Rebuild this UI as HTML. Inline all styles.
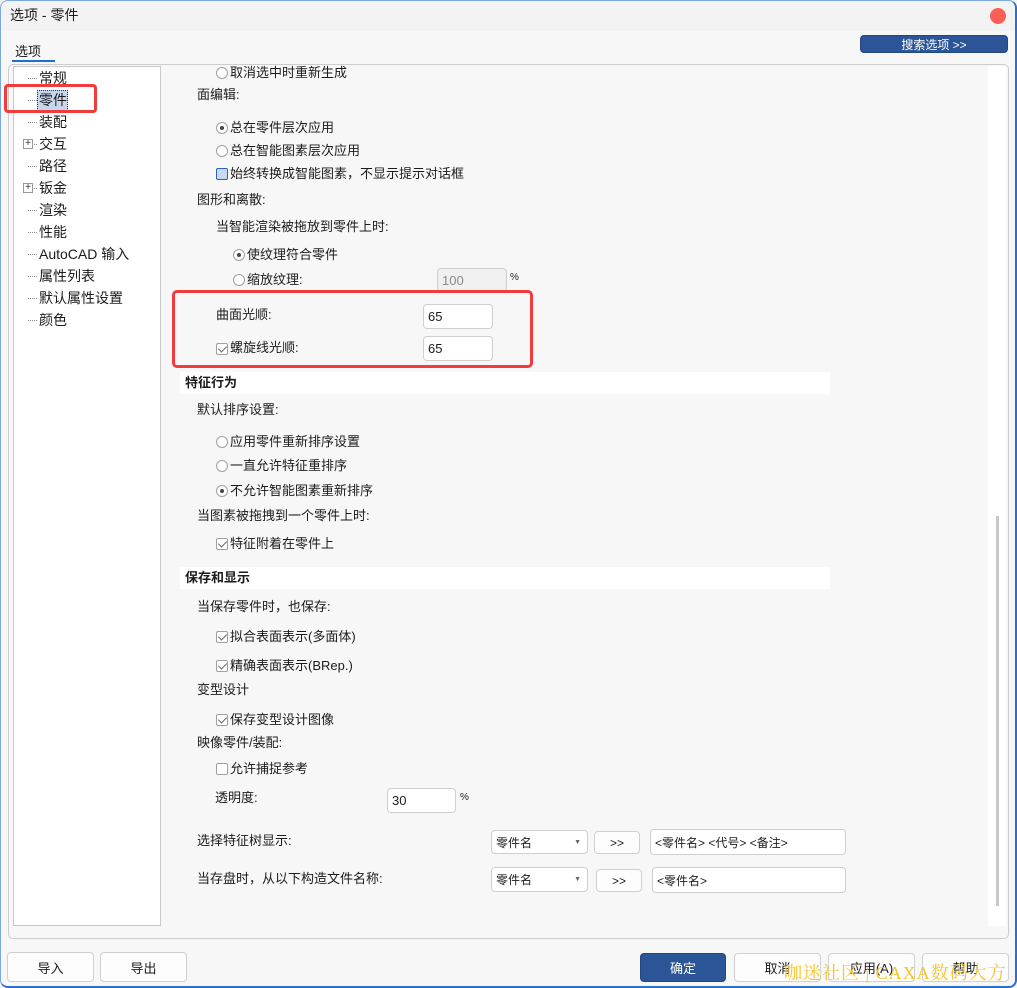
<!DOCTYPE html>
<html><head><meta charset="utf-8"><style>
*{box-sizing:border-box;margin:0;padding:0}
body{width:1017px;height:988px;overflow:hidden;background:#f3f3f3;font-family:"Liberation Sans","Noto Sans CJK SC",sans-serif;font-size:13px;color:#1b1b1b;position:relative}
.a{position:absolute;white-space:nowrap;line-height:16px}
.t{position:absolute;white-space:nowrap;line-height:16px;font-size:14px}
.rb{position:absolute;width:12px;height:12px;border:1px solid #a0a0a0;border-radius:50%;background:#fff}
.rb.on::after{content:"";position:absolute;left:3px;top:3px;width:4px;height:4px;border-radius:50%;background:#444}
.cb{position:absolute;width:12px;height:12px;border:1px solid #a0a0a0;border-radius:2px;background:#fff}
.cb.on::after{content:"";position:absolute;left:3px;top:0px;width:4px;height:7px;border:solid #666;border-width:0 1.5px 1.5px 0;transform:rotate(45deg)}
.in{position:absolute;background:#fff;border:1px solid #cfcfcf;border-radius:4px;padding-left:4px;display:flex;align-items:center;font-size:13px}
.btn{position:absolute;background:#fdfdfd;border:1px solid #d0d0d0;border-radius:4px;display:flex;align-items:center;justify-content:center;font-size:13px}
.hdr{position:absolute;left:180px;width:650px;height:22px;background:#fff;font-weight:bold;font-size:13px;line-height:22px;padding-left:5px}
.dot{position:absolute;left:28px;width:9px;border-top:1px dotted #888}
.plus{position:absolute;left:23px;width:10px;height:10px;border:1px solid #999;background:#fff;font-size:10px;line-height:8px;text-align:center;color:#333}
</style></head><body>
<div style="position:absolute;left:0;top:0;width:1017px;height:988px;border:1px solid #7aa7dc;border-right:2px solid #2a6fcf;border-bottom:2px solid #2a6fcf;border-radius:8px;pointer-events:none;z-index:5"></div>
<div class="a" style="left:10px;top:7px;font-size:14px">选项 - 零件</div>
<div style="position:absolute;left:990px;top:8px;width:16px;height:16px;border-radius:50%;background:#f95f53"></div>
<div style="position:absolute;left:0;top:31px;width:1017px;height:957px;background:#f7f7f7"></div>
<div class="a" style="left:15px;top:44px">选项</div>
<div style="position:absolute;left:12px;top:60px;width:43px;height:2px;background:#1f6fd0"></div>
<div class="btn" style="left:860px;top:35px;width:148px;height:18px;background:#2b5597;border-color:#24477e;color:#fff;font-size:12px">搜索选项 &gt;&gt;</div>
<div style="position:absolute;left:8px;top:64px;width:1001px;height:875px;border:1px solid #cdcdcd;border-radius:5px;background:#f7f7f7"></div>
<div style="position:absolute;left:13px;top:66px;width:148px;height:860px;border:1px solid #c8c8c8;background:#fff"></div>
<div style="position:absolute;left:988px;top:66px;width:18px;height:860px;background:#fff"></div>
<div style="position:absolute;left:996px;top:516px;width:3px;height:390px;background:#c8c8c8"></div>

<div class="dot" style="top:78px"></div><div class="t" style="left:39px;top:70px">常规</div>
<div class="dot" style="top:100px"></div>
<div style="position:absolute;left:37px;top:90px;width:31px;height:21px;background:#c6d6ec;border:1px dotted #333"></div>
<div class="t" style="left:39px;top:92px">零件</div>
<div class="dot" style="top:122px"></div><div class="t" style="left:39px;top:114px">装配</div>
<div class="dot" style="top:144px"></div><div class="plus" style="top:139px">+</div><div class="t" style="left:39px;top:136px">交互</div>
<div class="dot" style="top:166px"></div><div class="t" style="left:39px;top:158px">路径</div>
<div class="dot" style="top:188px"></div><div class="plus" style="top:183px">+</div><div class="t" style="left:39px;top:180px">钣金</div>
<div class="dot" style="top:210px"></div><div class="t" style="left:39px;top:202px">渲染</div>
<div class="dot" style="top:232px"></div><div class="t" style="left:39px;top:224px">性能</div>
<div class="dot" style="top:254px"></div><div class="t" style="left:39px;top:246px">AutoCAD 输入</div>
<div class="dot" style="top:276px"></div><div class="t" style="left:39px;top:268px">属性列表</div>
<div class="dot" style="top:298px"></div><div class="t" style="left:39px;top:290px">默认属性设置</div>
<div class="dot" style="top:320px"></div><div class="t" style="left:39px;top:312px">颜色</div>
<div style="position:absolute;left:4px;top:84px;width:93px;height:29px;border:3px solid #f23c3c;border-radius:4px"></div>

<div class="rb" style="left:216px;top:67px"></div><div class="a" style="left:230px;top:65px">取消选中时重新生成</div>
<div class="a" style="left:197px;top:87px">面编辑:</div>
<div class="rb on" style="left:216px;top:122px"></div><div class="a" style="left:230px;top:120px">总在零件层次应用</div>
<div class="rb" style="left:216px;top:145px"></div><div class="a" style="left:230px;top:143px">总在智能图素层次应用</div>
<div class="cb" style="left:216px;top:168px;background:#c9daf0;border-color:#2b64b8;border-width:1.5px"></div><div class="a" style="left:230px;top:166px">始终转换成智能图素，不显示提示对话框</div>
<div class="a" style="left:197px;top:192px">图形和离散:</div>
<div class="a" style="left:216px;top:219px">当智能渲染被拖放到零件上时:</div>
<div class="rb on" style="left:233px;top:249px"></div><div class="a" style="left:247px;top:247px">使纹理符合零件</div>
<div class="rb" style="left:233px;top:274px"></div><div class="a" style="left:247px;top:272px">缩放纹理:</div>
<div class="in" style="left:437px;top:268px;width:70px;height:24px;background:#f0f0f0;color:#888">100</div>
<div class="a" style="left:510px;top:270px;font-size:10px">%</div>
<div class="a" style="left:216px;top:307px">曲面光顺:</div>
<div class="in" style="left:423px;top:304px;width:70px;height:25px">65</div>
<div class="cb on" style="left:216px;top:343px"></div><div class="a" style="left:230px;top:340px">螺旋线光顺:</div>
<div class="in" style="left:423px;top:336px;width:70px;height:25px">65</div>
<div style="position:absolute;left:172px;top:290px;width:361px;height:78px;border:3px solid #f23c3c;border-radius:5px"></div>

<div class="hdr" style="top:372px">特征行为</div>
<div class="a" style="left:197px;top:402px">默认排序设置:</div>
<div class="rb" style="left:216px;top:436px"></div><div class="a" style="left:230px;top:434px">应用零件重新排序设置</div>
<div class="rb" style="left:216px;top:460px"></div><div class="a" style="left:230px;top:458px">一直允许特征重排序</div>
<div class="rb on" style="left:216px;top:485px"></div><div class="a" style="left:230px;top:483px">不允许智能图素重新排序</div>
<div class="a" style="left:197px;top:508px">当图素被拖拽到一个零件上时:</div>
<div class="cb on" style="left:216px;top:538px"></div><div class="a" style="left:230px;top:536px">特征附着在零件上</div>

<div class="hdr" style="top:567px">保存和显示</div>
<div class="a" style="left:197px;top:599px">当保存零件时，也保存:</div>
<div class="cb on" style="left:216px;top:631px"></div><div class="a" style="left:230px;top:629px">拟合表面表示(多面体)</div>
<div class="cb on" style="left:216px;top:660px"></div><div class="a" style="left:230px;top:658px">精确表面表示(BRep.)</div>
<div class="a" style="left:197px;top:682px">变型设计</div>
<div class="cb on" style="left:216px;top:714px"></div><div class="a" style="left:230px;top:712px">保存变型设计图像</div>
<div class="a" style="left:197px;top:735px">映像零件/装配:</div>
<div class="cb" style="left:216px;top:763px"></div><div class="a" style="left:230px;top:761px">允许捕捉参考</div>
<div class="a" style="left:215px;top:790px">透明度:</div>
<div class="in" style="left:387px;top:788px;width:69px;height:25px">30</div>
<div class="a" style="left:460px;top:790px;font-size:10px">%</div>

<div class="a" style="left:197px;top:833px">选择特征树显示:</div>
<div class="in" style="left:491px;top:830px;width:97px;height:24px;font-size:12px">零件名<span style="position:absolute;right:6px;font-size:7px;color:#666">▼</span></div>
<div class="btn" style="left:594px;top:831px;width:46px;height:23px;font-size:12px">&gt;&gt;</div>
<div class="in" style="left:650px;top:829px;width:196px;height:26px;font-size:12px">&lt;零件名&gt; &lt;代号&gt; &lt;备注&gt;</div>
<div class="a" style="left:197px;top:871px">当存盘时，从以下构造文件名称:</div>
<div class="in" style="left:491px;top:867px;width:97px;height:25px;font-size:12px">零件名<span style="position:absolute;right:6px;font-size:7px;color:#666">▼</span></div>
<div class="btn" style="left:596px;top:869px;width:46px;height:23px;font-size:12px">&gt;&gt;</div>
<div class="in" style="left:652px;top:867px;width:194px;height:26px;font-size:12px">&lt;零件名&gt;</div>

<div class="btn" style="left:7px;top:952px;width:87px;height:30px">导入</div>
<div class="btn" style="left:100px;top:952px;width:87px;height:30px">导出</div>
<div class="btn" style="left:640px;top:953px;width:86px;height:29px;background:#2b5597;border-color:#24477e;color:#fff">确定</div>
<div class="btn" style="left:734px;top:953px;width:87px;height:29px">取消</div>
<div class="btn" style="left:828px;top:953px;width:87px;height:29px">应用(A)</div>
<div class="btn" style="left:922px;top:953px;width:87px;height:29px">帮助</div>
<div class="a" style="left:784px;top:962px;font-family:'Liberation Serif','Noto Serif CJK SC',serif;font-size:18px;line-height:22px;color:#f7c42a;letter-spacing:1px">咖迷社区 | CAXA数码大方</div>
</body></html>
